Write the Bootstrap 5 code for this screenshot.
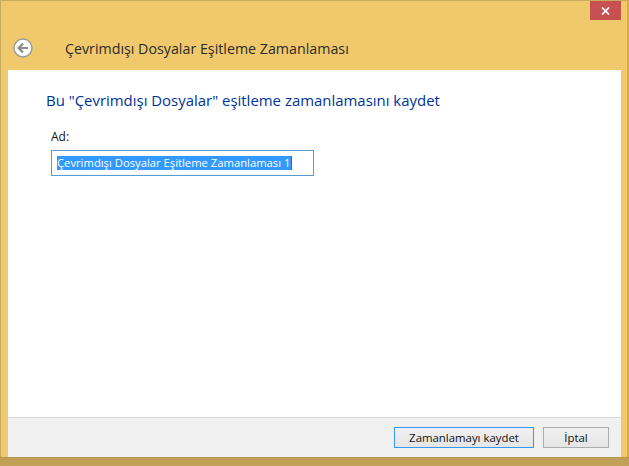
<!DOCTYPE html>
<html lang="tr"><head><meta charset="utf-8"><title>Çevrimdışı Dosyalar</title>
<link href="https://cdn.jsdelivr.net/npm/bootstrap@5.3.0/dist/css/bootstrap.min.css" rel="stylesheet">
<style>
html,body{margin:0;height:466px;overflow:hidden;background:#efc86b}
.win-shell{height:466px;width:629px;border:1px solid #c9a95c;border-bottom:0;border-right:2px solid #d8ac3d;background:#f0c96c;font-family:"Open Sans","Noto Sans",sans-serif}
.win-close{width:31px;height:19px;background:#c75050;margin-right:6px;border:0;padding:0}
.win-head{height:50px;padding-left:12px;padding-top:18px}
.win-title{font-size:14.25px;color:#2b2b2b;margin-left:32px;line-height:22px;white-space:nowrap}
.win-body{margin:0 6px 0 7px;height:347px;background:#fff;padding:20px 0 0 38px}
.win-main{font-size:14.95px;color:#003399;line-height:20px;margin:0;font-weight:400}
.win-label{font-size:12px;color:#111;line-height:15px;margin:19px 0 6px 5px;display:block}
.win-field{width:263px;height:26px;border:1px solid #5b9bd5;margin-left:5px;padding:0 0 0 5px;display:flex;align-items:center}
.win-sel{background:#3399ff;color:#fff;font-size:11.25px;line-height:14px;white-space:nowrap;padding-right:1px;border-right:1px solid #8a5a20}
.win-foot{margin:0 6px 0 7px;height:40px;background:#f0f0f0;border-top:1px solid #d9d9d9;padding:9px 12px 0 0;gap:9px}
.win-btn{height:21px;background:linear-gradient(#f0f0f0,#e5e5e5);border:1px solid #acacac;border-radius:0;font-size:11.4px;line-height:17px;color:#111;padding:0;box-shadow:none}
.win-btn-save{width:140px;border:1px solid #3399ff}
.win-btn-cancel{width:66px}
.win-band{height:9px;background:#c2a058;border-top:1px solid #b39550;margin:0 -2px 0 -1px}
</style></head>
<body>
<div class="win-shell d-flex flex-column">
  <div class="d-flex justify-content-end">
    <button class="win-close d-flex align-items-center justify-content-center" aria-label="Kapat">
      <svg width="9" height="8" viewBox="0 0 9 8"><path d="M1 .5 8 7.5M8 .5 1 7.5" stroke="#fff" stroke-width="1.7" fill="none"/></svg>
    </button>
  </div>
  <div class="win-head d-flex align-items-start">
    <svg width="20" height="20" viewBox="0 0 20 20" class="flex-shrink-0">
      <circle cx="10" cy="10" r="9" fill="#fff" stroke="#9a9a9a" stroke-width="1.4"/>
      <path d="M15 10H6M10 5.6 5.6 10 10 14.4" stroke="#8c8c8c" stroke-width="2.2" fill="none"/>
    </svg>
    <div class="win-title">Çevrimdışı Dosyalar Eşitleme Zamanlaması</div>
  </div>
  <div class="win-body">
    <h1 class="win-main">Bu "Çevrimdışı Dosyalar" eşitleme zamanlamasını kaydet</h1>
    <label class="win-label">Ad:</label>
    <div class="win-field"><span class="win-sel">Çevrimdışı Dosyalar Eşitleme Zamanlaması 1</span></div>
  </div>
  <div class="win-foot d-flex justify-content-end align-items-start">
    <button class="btn win-btn win-btn-save">Zamanlamayı kaydet</button>
    <button class="btn win-btn win-btn-cancel">İptal</button>
  </div>
  <div class="win-band"></div>
</div>
<script src="https://cdn.jsdelivr.net/npm/bootstrap@5.3.0/dist/js/bootstrap.bundle.min.js"></script>
</body></html>
